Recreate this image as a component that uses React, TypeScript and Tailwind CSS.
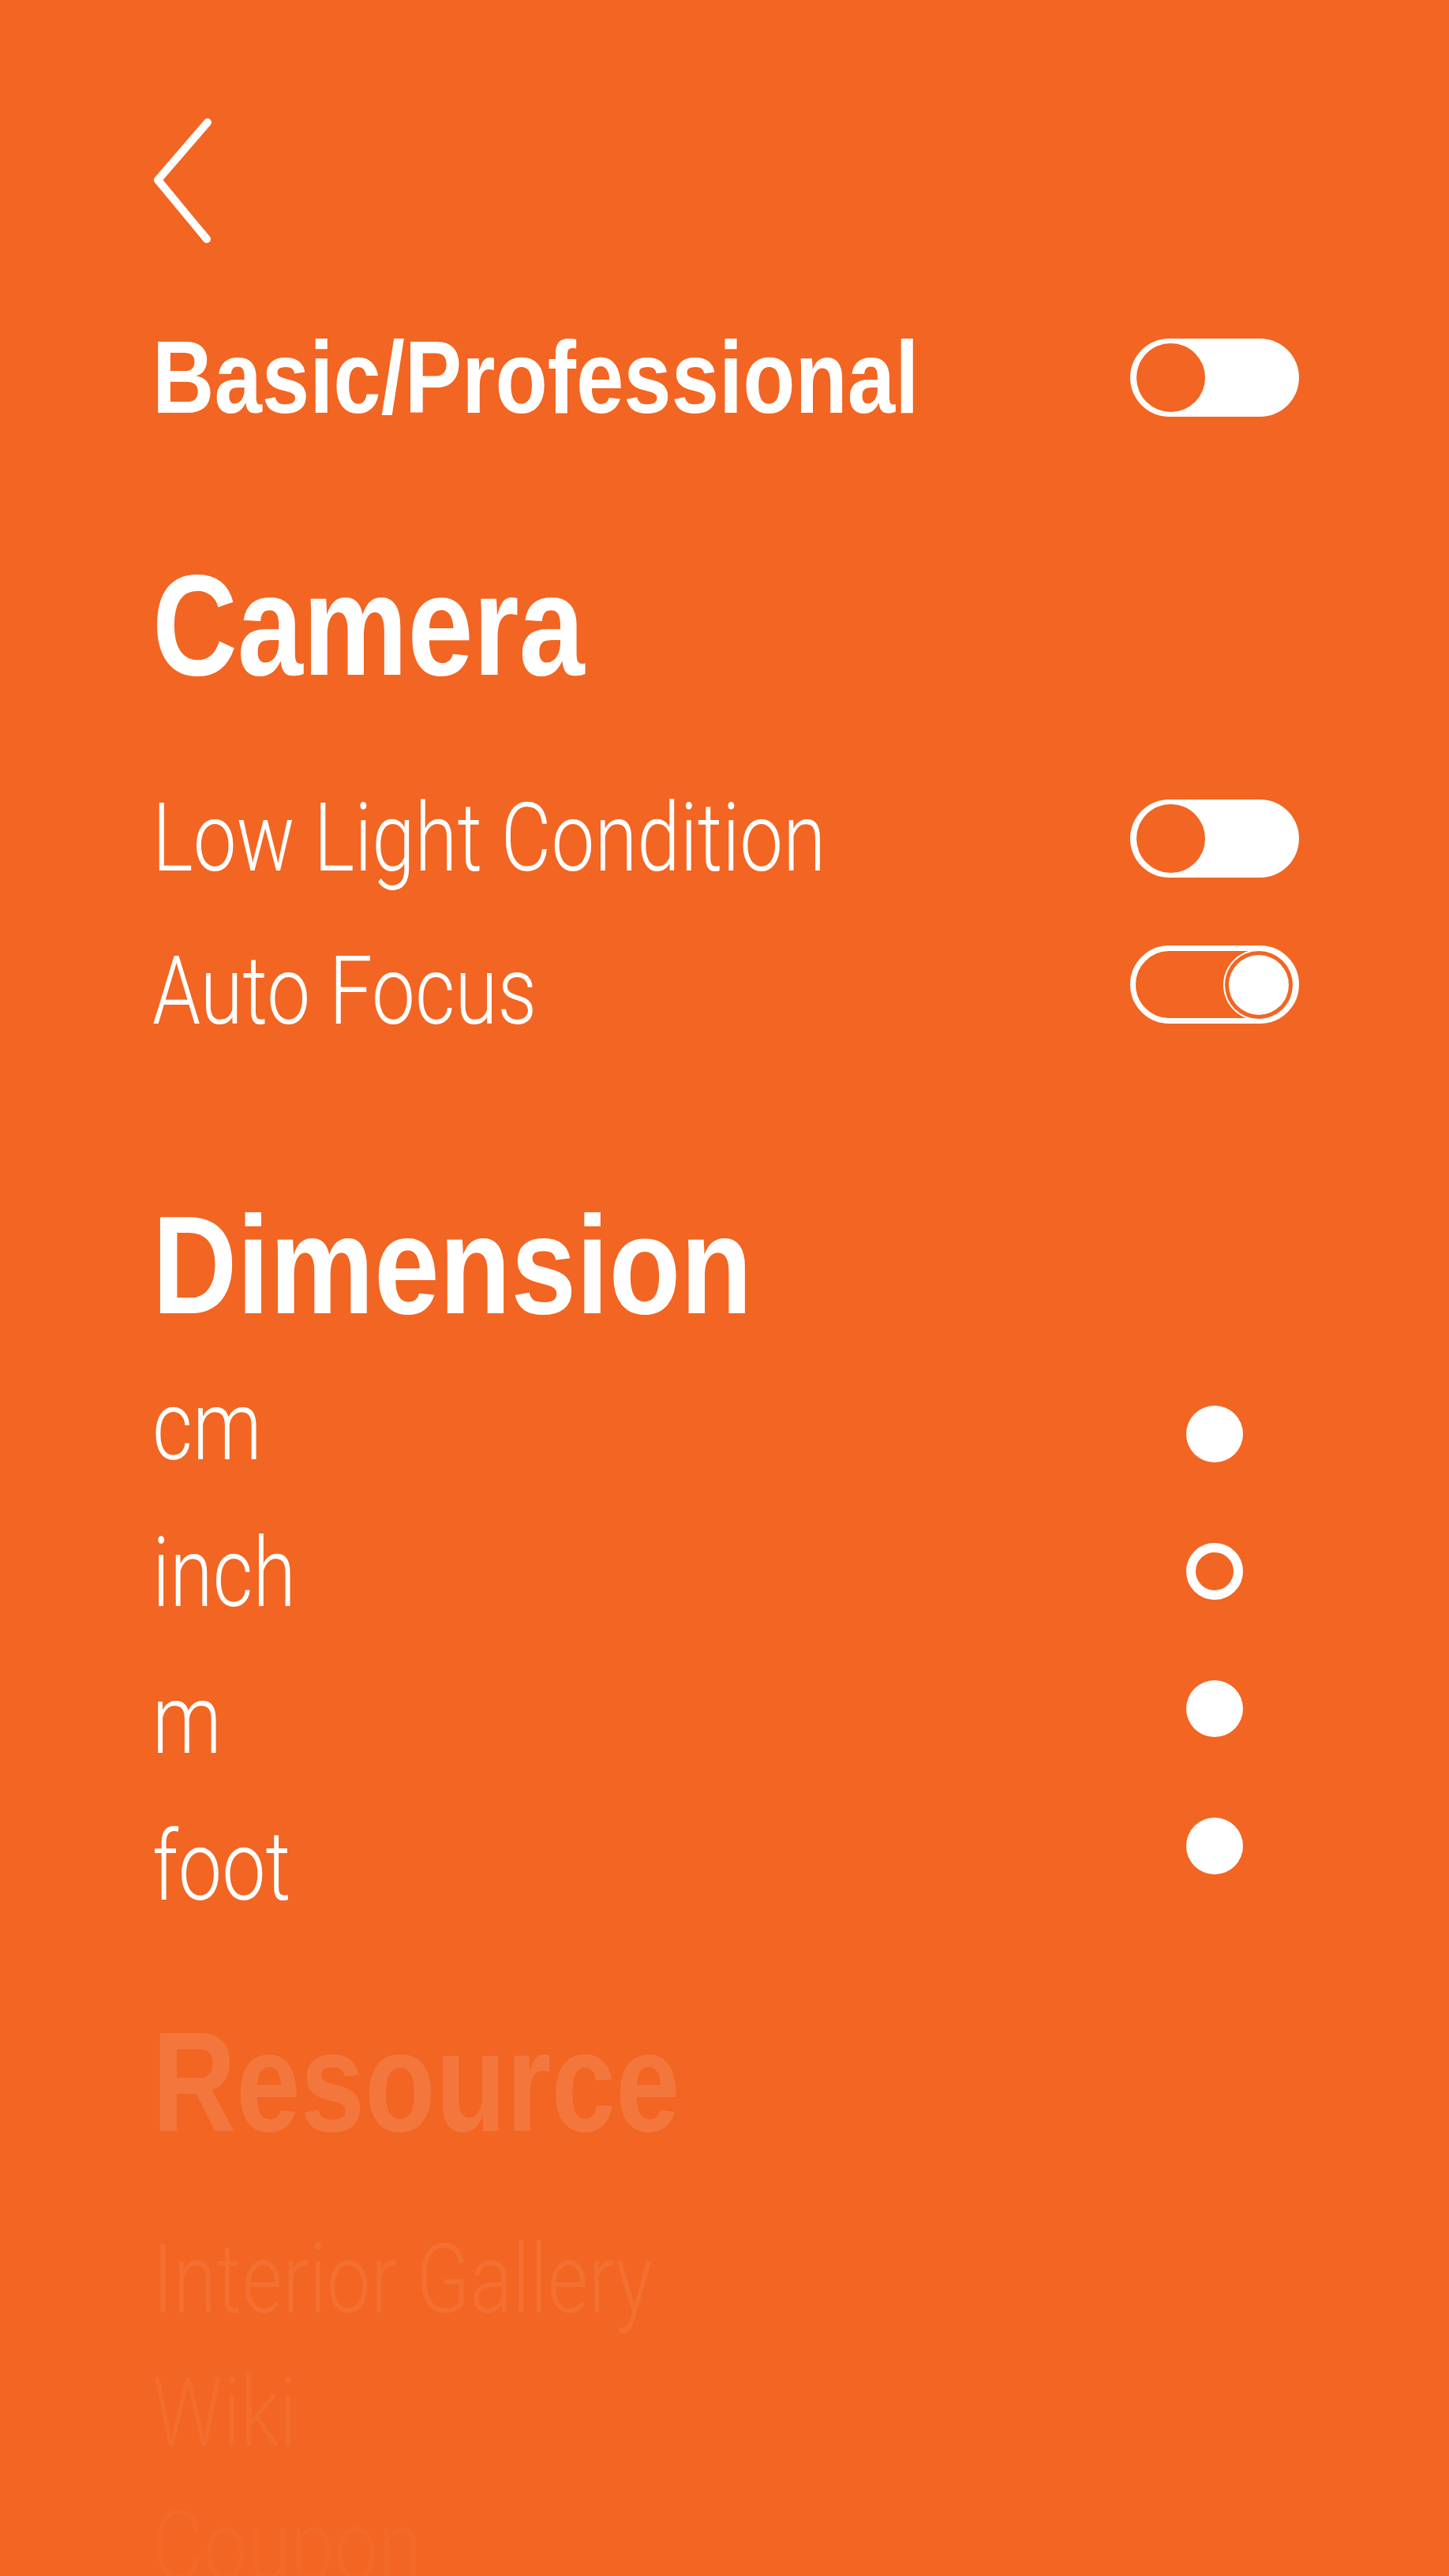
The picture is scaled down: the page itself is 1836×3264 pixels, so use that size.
import React from "react";

const Toggle = ({ on }: { on: boolean }) => {
  if (on) {
    return (
      <div className="flex h-[99px] w-[214px] items-center justify-end rounded-full border-[7px] border-white pr-[6px] mb-[18px]">
        <div className="h-[76px] w-[76px] rounded-full bg-white shadow-[0_0_0_5px_#f26522,0_0_0_7px_#ffffff]" />
      </div>
    );
  }
  return (
    <div className="flex h-[99px] w-[214px] items-center rounded-full bg-white pl-[8px]">
      <div className="h-[87px] w-[87px] rounded-full bg-[#f26522]" />
    </div>
  );
};

const units = ["cm", "inch", "m", "foot"];

// condensed look: no narrow family on the box, so squeeze horizontally
const bold = "block origin-left font-bold leading-none font-['Liberation_Sans',sans-serif]";
const light = "block origin-left scale-x-[0.81] font-light leading-none font-['Roboto','Liberation_Sans',sans-serif]";

export default function App() {
  return (
    <div className="h-[3264px] w-[1836px] overflow-hidden bg-[#f26522] pl-[193px] pr-[190px] pt-[145px] text-white">
      <svg width="80" height="170" viewBox="0 0 80 170" className="-ml-[3px]" fill="none">
        <path d="M73 10 L10 83 L72 158" stroke="#ffffff" strokeWidth="10" strokeLinecap="round" strokeLinejoin="round" />
      </svg>

      <div className="mt-[98px] flex items-center justify-between">
        <span className={`${bold} scale-x-[0.835] text-[130px]`}>Basic/Professional</span>
        <Toggle on={false} />
      </div>

      <h2 className={`${bold} scale-x-[0.82] mt-[158px] text-[182px]`}>Camera</h2>

      <div className="mt-[119px] flex flex-col gap-[73px]">
        <div className="flex items-center justify-between">
          <span className={`${light} text-[121px]`}>Low Light Condition</span>
          <Toggle on={false} />
        </div>
        <div className="flex items-center justify-between">
          <span className={`${light} text-[121px]`}>Auto Focus</span>
          <Toggle on={true} />
        </div>
      </div>

      <h2 className={`${bold} scale-x-[0.84] mt-[198px] text-[177px]`}>Dimension</h2>

      <div className="mt-[55px] flex justify-between">
        <div className="flex flex-col gap-[64px]">
          {units.map((u) => (
            <span key={u} className={`${light} text-[122px]`}>{u}</span>
          ))}
        </div>
        <div className="flex w-[214px] flex-col items-center gap-[102px] pt-[34px]">
          <div className="h-[72px] w-[72px] rounded-full bg-white" />
          <div className="h-[72px] w-[72px] rounded-full border-[12px] border-white" />
          <div className="h-[72px] w-[72px] rounded-full bg-white" />
          <div className="h-[72px] w-[72px] rounded-full bg-white" />
        </div>
      </div>

      <h2 className={`${bold} scale-x-[0.815] mt-[121px] text-[180px] text-white/[0.12]`}>Resource</h2>

      <div className="mt-[99px] flex flex-col gap-[46px] text-[123px]">
        <span className={`${light} text-white/[0.07]`}>Interior Gallery</span>
        <span className={`${light} text-white/[0.05]`}>Wiki</span>
        <span className={`${light} text-white/[0.03]`}>Coupon</span>
      </div>
    </div>
  );
}
